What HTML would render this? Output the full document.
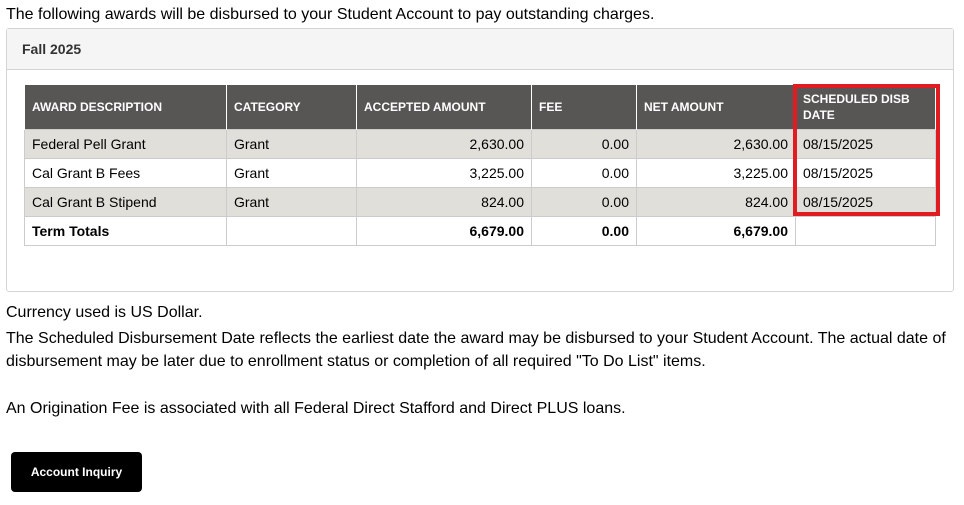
<!DOCTYPE html>
<html><head><style>
body{margin:0;width:964px;height:505px;background:#fff;font-family:"Liberation Sans",Arial,sans-serif;color:#000;position:relative;overflow:hidden}
.t{position:absolute;left:6px;font-size:16px;white-space:nowrap}
.panel{position:absolute;left:6px;top:28px;width:946px;height:262px;border:1px solid #d4d4d4;border-radius:3px}
.ph{height:40px;background:#f5f5f5;border-bottom:1px solid #d4d4d4;font-weight:bold;font-size:14px;color:#333;line-height:41px;padding-left:15px}
table{position:absolute;left:24px;top:85px;border-collapse:collapse;font-size:14px}
td,th{border:1px solid #ccc;padding:0 7px;height:28px}
th{background:#575654;color:#fff;font-size:12px;text-align:left;height:44px;border-color:#fff;border-top:none;border-bottom:none;font-weight:bold}
tr.g td{background:#e1dfda}
.r{text-align:right}
.red{position:absolute;left:793px;top:84px;width:139px;height:124px;border:4px solid #e11b22}
.btn{position:absolute;left:11px;top:452px;width:131px;height:40px;background:#000;color:#fff;border-radius:4px;font-size:12px;font-weight:bold;text-align:center;line-height:40px}
</style></head><body>
<div class="t" style="top:6px">The following awards will be disbursed to your Student Account to pay outstanding charges.</div>
<div class="panel"><div class="ph">Fall 2025</div></div>
<table>
<tr><th style="width:187px">AWARD DESCRIPTION</th><th style="width:115px">CATEGORY</th><th style="width:160px">ACCEPTED AMOUNT</th><th style="width:90px">FEE</th><th style="width:144px">NET AMOUNT</th><th style="width:125px;line-height:16px">SCHEDULED DISB DATE</th></tr>
<tr class="g"><td>Federal Pell Grant</td><td>Grant</td><td class="r">2,630.00</td><td class="r">0.00</td><td class="r">2,630.00</td><td>08/15/2025</td></tr>
<tr><td>Cal Grant B Fees</td><td>Grant</td><td class="r">3,225.00</td><td class="r">0.00</td><td class="r">3,225.00</td><td>08/15/2025</td></tr>
<tr class="g"><td>Cal Grant B Stipend</td><td>Grant</td><td class="r">824.00</td><td class="r">0.00</td><td class="r">824.00</td><td>08/15/2025</td></tr>
<tr style="font-weight:bold"><td>Term Totals</td><td></td><td class="r">6,679.00</td><td class="r">0.00</td><td class="r">6,679.00</td><td></td></tr>
</table>
<div class="red"></div>
<div class="t" style="top:304px">Currency used is US Dollar.</div>
<div class="t" style="top:327px;white-space:normal;width:950px;line-height:23px">The Scheduled Disbursement Date reflects the earliest date the award may be disbursed to your Student Account. The actual date of disbursement may be later due to enrollment status or completion of all required "To Do List" items.</div>
<div class="t" style="top:400px">An Origination Fee is associated with all Federal Direct Stafford and Direct PLUS loans.</div>
<div class="btn">Account Inquiry</div>
</body></html>
